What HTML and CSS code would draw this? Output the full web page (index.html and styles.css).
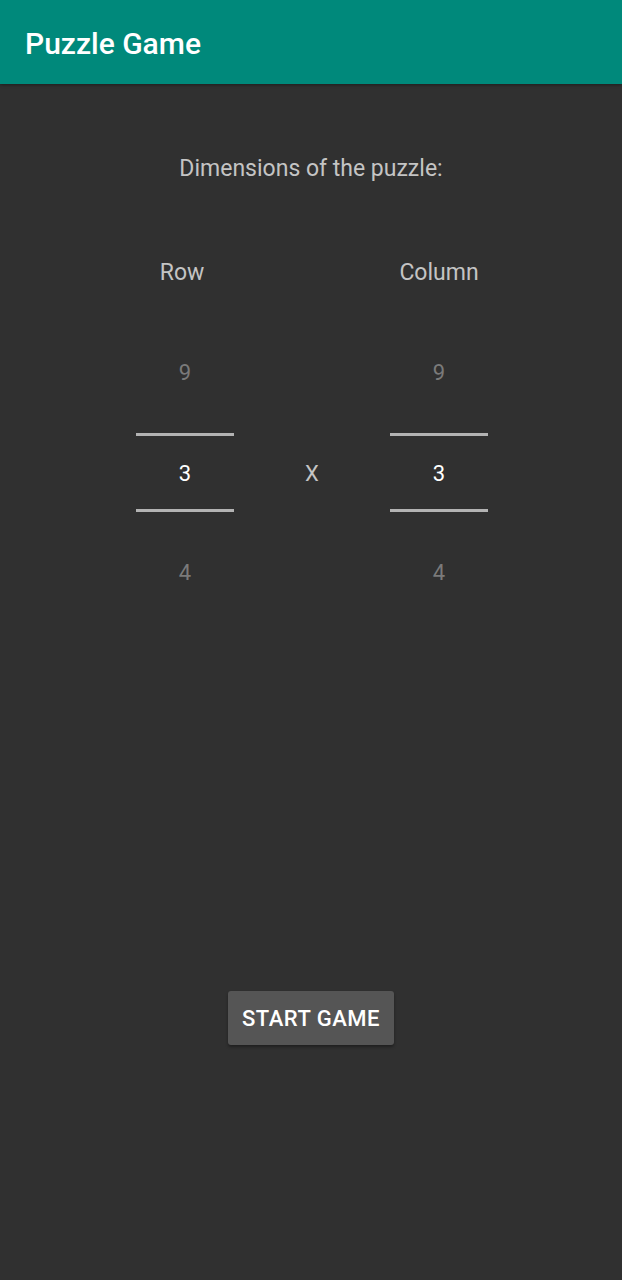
FILE: index.html
```html
<!DOCTYPE html>
<html>
<head>
<meta charset="utf-8">
<link rel="stylesheet" href="styles.css">
</head>
<body>
<header class="appbar"><h1 class="title">Puzzle Game</h1></header>
<main class="content">
  <p class="prompt">Dimensions of the puzzle:</p>
  <div class="labels">
    <span class="label label-row">Row</span>
    <span class="spacer"></span>
    <span class="label">Column</span>
  </div>
  <div class="pickers">
    <div class="picker">
      <div class="num dim">9</div>
      <div class="line"></div>
      <div class="num sel">3</div>
      <div class="line"></div>
      <div class="num dim">4</div>
    </div>
    <div class="times">X</div>
    <div class="picker">
      <div class="num dim">9</div>
      <div class="line"></div>
      <div class="num sel">3</div>
      <div class="line"></div>
      <div class="num dim">4</div>
    </div>
  </div>
  <button class="start">START GAME</button>
</main>
</body>
</html>
```
FILE: styles.css
```css
html, body { margin: 0; padding: 0; }
body {
  width: 622px;
  height: 1280px;
  background: #303030;
  font-family: Roboto, "Noto Sans", sans-serif;
  overflow: hidden;
}
.appbar {
  height: 84px;
  box-sizing: border-box;
  background: #00897b;
  display: flex;
  align-items: center;
  padding-left: 25px;
  padding-top: 3px;
  box-shadow: 0 1px 3px rgba(0,0,0,0.4);
}
.title {
  margin: 0;
  color: #fff;
  font-size: 30px;
  font-weight: 500;
  line-height: 34px;
}
.content {
  display: flex;
  flex-direction: column;
  align-items: center;
  padding-top: 70px;
}
.prompt {
  margin: 0;
  color: #c4c4c4;
  font-size: 23px;
  line-height: 30px;
}
.labels {
  display: flex;
  margin-top: 74px;
  height: 30px;
  padding-left: 2px;
}
.label {
  width: 98px;
  box-sizing: border-box;
  text-align: center;
  color: #c4c4c4;
  font-size: 23px;
  line-height: 30px;
}
.label-row { padding-right: 6px; }
.spacer { width: 156px; }
.pickers {
  display: flex;
  margin-top: 34px;
  padding-left: 2px;
}
.picker {
  width: 98px;
  display: flex;
  flex-direction: column;
  align-items: stretch;
}
.num {
  text-align: center;
  font-size: 22px;
}
.num.dim {
  height: 100px;
  line-height: 100px;
  color: #7a7a7a;
}
.picker .num.dim:first-child { line-height: 102px; }
.num.sel {
  height: 73px;
  line-height: 75px;
  color: #ffffff;
}
.line {
  height: 3px;
  background: #b3b3b3;
  margin-top: 11px;
}
.num.sel + .line { margin-top: 0; margin-bottom: 11px; }
.times {
  width: 156px;
  margin-top: 114px;
  height: 73px;
  line-height: 75px;
  text-align: center;
  color: #c4c4c4;
  font-size: 22px;
}
.start {
  margin-top: 368px;
  width: 166px;
  height: 54px;
  background: #555555;
  color: #ffffff;
  border: none;
  border-radius: 3px;
  font-family: Roboto, "Noto Sans", sans-serif;
  font-size: 22px;
  font-weight: 500;
  letter-spacing: 0.5px;
  padding: 0;
  box-shadow: 0 2px 3px rgba(0,0,0,0.35);
}
```
